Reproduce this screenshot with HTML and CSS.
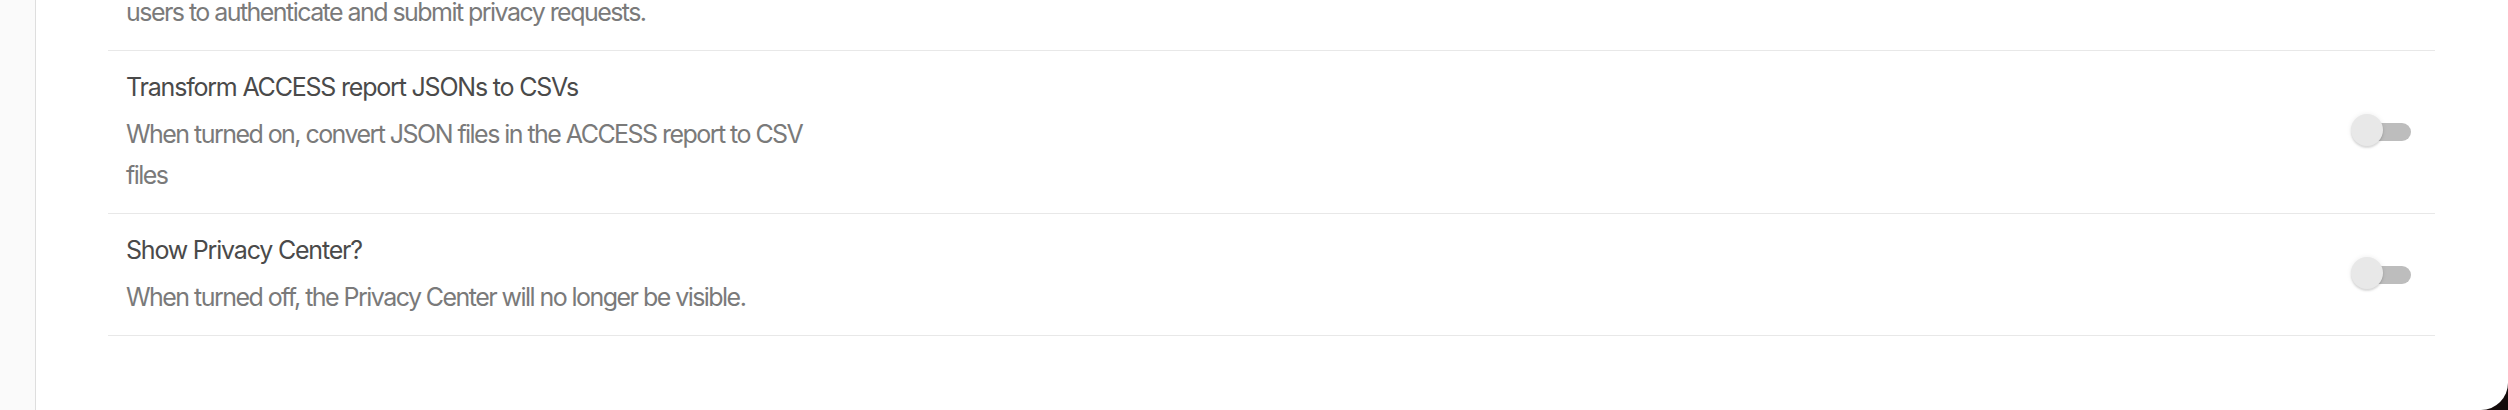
FILE: index.html
```html
<!DOCTYPE html>
<html lang="en">
<head>
    <meta charset="UTF-8">
    <meta name="viewport" content="width=device-width, initial-scale=1.0">
    <title>Privacy Center Settings</title>
    <link rel="stylesheet" href="styles.css">
</head>
<body>

<div class="app">
    <aside class="sidebar"></aside>

    <main class="content">
        <div class="settings">

            <div class="setting setting-clipped">
                <p class="setting-desc">users to authenticate and submit privacy requests.</p>
            </div>

            <div class="setting">
                <div class="setting-text">
                    <p class="setting-title">Transform ACCESS report JSONs to CSVs</p>
                    <p class="setting-desc">When turned on, convert JSON files in the ACCESS report to CSV files</p>
                </div>
                <label class="switch">
                    <input type="checkbox" name="access_csv">
                    <span class="switch-track"></span>
                    <span class="switch-thumb"></span>
                </label>
            </div>

            <div class="setting">
                <div class="setting-text">
                    <p class="setting-title">Show Privacy Center?</p>
                    <p class="setting-desc">When turned off, the Privacy Center will no longer be visible.</p>
                </div>
                <label class="switch">
                    <input type="checkbox" name="show_privacy_center">
                    <span class="switch-track"></span>
                    <span class="switch-thumb"></span>
                </label>
            </div>

        </div>
    </main>
</div>

</body>
</html>
```

FILE: styles.css
```css
html, body {
    height: 100%;
}
body {
    margin: 0;
    padding: 0;
    background-color: #140b0b;
    font-family: Inter, "Liberation Sans", sans-serif;
    overflow: hidden;
}
.app {
    display: flex;
    height: 410px;
    background-color: #fff;
    border-bottom-right-radius: 27px;
    overflow: hidden;
}
.sidebar {
    width: 35px;
    flex-shrink: 0;
    background-color: #fafafa;
    border-right: 1px solid #dedede;
}
.content {
    flex: 1;
    padding: 0 73px 0 72px;
}
.settings {
    margin-top: -8px;
}
.setting {
    display: flex;
    align-items: center;
    justify-content: space-between;
    padding: 18px 24px 17px 18px;
    border-bottom: 1px solid #e8e8e8;
}
.setting-clipped {
    padding-top: 0;
}
.setting-text {
    max-width: 720px;
}
.setting-title {
    margin: 0 0 9px 0;
    font-size: 25px;
    line-height: 36px;
    letter-spacing: -1.2px;
    color: #4a4a4a;
}
.setting-desc {
    margin: 0;
    font-size: 25px;
    line-height: 41px;
    letter-spacing: -1.55px;
    color: #7a7a7a;
}
.switch {
    position: relative;
    display: block;
    width: 60px;
    height: 33px;
    margin-bottom: 4px;
    flex-shrink: 0;
    cursor: pointer;
}
.switch input {
    display: none;
}
.switch-track {
    position: absolute;
    left: 4px;
    right: 0;
    top: 9px;
    height: 18px;
    border-radius: 9px;
    background-color: #bdbdbd;
}
.switch-thumb {
    position: absolute;
    left: 0;
    top: 0;
    width: 32px;
    height: 32px;
    border-radius: 50%;
    background-color: #e8e8e8;
    box-shadow: 0 2px 2px rgba(0, 0, 0, 0.12), 0 0 5px rgba(0, 0, 0, 0.08);
}
```
